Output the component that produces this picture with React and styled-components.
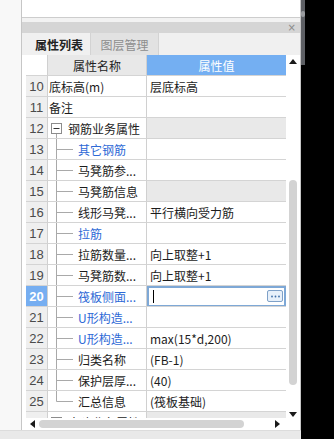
import React from "react";
import styled, { createGlobalStyle } from "styled-components";

const GlobalStyle = createGlobalStyle`
  html, body {
    margin: 0;
    padding: 0;
    background: #000;
  }
  body {
    font-family: "Noto Sans CJK SC", "Noto Sans", sans-serif;
  }
`;

const rows = [
  { n: 10, name: "底标高(m)", value: "层底标高" },
  { n: 11, name: "备注" },
  { n: 12, name: "钢筋业务属性", group: "open", locked: true },
  { n: 13, name: "其它钢筋", child: true, link: true },
  { n: 14, name: "马凳筋参...", child: true },
  { n: 15, name: "马凳筋信息", child: true, locked: true },
  { n: 16, name: "线形马凳...", child: true, value: "平行横向受力筋" },
  { n: 17, name: "拉筋", child: true, link: true },
  { n: 18, name: "拉筋数量...", child: true, value: "向上取整+1" },
  { n: 19, name: "马凳筋数...", child: true, value: "向上取整+1" },
  { n: 20, name: "筏板侧面...", child: true, link: true, editing: true },
  { n: 21, name: "U形构造...", child: true, link: true },
  { n: 22, name: "U形构造...", child: true, link: true, value: "max(15*d,200)" },
  { n: 23, name: "归类名称", child: true, value: "(FB-1)" },
  { n: 24, name: "保护层厚...", child: true, value: "(40)" },
  { n: 25, name: "汇总信息", child: true, last: true, value: "(筏板基础)" },
  { n: 26, name: "土建业务属性", group: "closed", locked: true },
];

const Branch = ({ last }) => (
  <TreeSvg width="28" height="20" viewBox="0 0 28 20">
    <line x1="8.5" y1="0" x2="8.5" y2={last ? 10.5 : 20} />
    <line x1="8.5" y1="10.5" x2="25" y2="10.5" />
  </TreeSvg>
);

const Toggle = ({ open }) => (
  <TreeSvg width="20" height="20" viewBox="0 0 20 20">
    {open && <line x1="8.5" y1="15.5" x2="8.5" y2="20" />}
    <rect x="3.5" y="5.5" width="10" height="10" fill="#fff" stroke="#8c8c8c" />
    <line x1="5.5" y1="10.5" x2="11.5" y2="10.5" stroke="#333" />
    {!open && <line x1="8.5" y1="7.5" x2="8.5" y2="13.5" stroke="#333" />}
  </TreeSvg>
);

const Arrow = ({ dir }) => {
  const pts = {
    up: "0,5 4,0 8,5",
    down: "0,0 8,0 4,5",
    left: "5,0 5,8 0,4",
    right: "0,0 5,4 0,8",
  }[dir];
  const vertical = dir === "up" || dir === "down";
  return (
    <svg width={vertical ? 8 : 5} height={vertical ? 5 : 8}>
      <polygon points={pts} fill="#1a1a1a" />
    </svg>
  );
};

const App = () => {
  return (
    <>
      <GlobalStyle />
      <Screen>
        <Workspace>
          <Main>
            <LeftStrip />
            <Panel>
              <TopPane />
              <PaneGap />
              <DockHeader>
                <CloseMark>×</CloseMark>
              </DockHeader>
              <TabBar>
                <Tab $active>属性列表</Tab>
                <Tab>图层管理</Tab>
              </TabBar>
              <GridArea>
                <Table>
                  <Row>
                    <HeadNum />
                    <HeadCell>属性名称</HeadCell>
                    <HeadCell $accent>属性值</HeadCell>
                  </Row>
                  {rows.map((r) => (
                    <Row key={r.n}>
                      <NumCell $selected={r.editing}>{r.n}</NumCell>
                      <NameCell $link={r.link}>
                        {r.group && <Toggle open={r.group === "open"} />}
                        {r.child && <Branch last={r.last} />}
                        <NameText $indent={r.group ? 0 : r.child ? 2 : 1}>
                          {r.name}
                        </NameText>
                      </NameCell>
                      <ValueCell $locked={r.locked}>
                        {r.editing ? (
                          <EditBox>
                            <Caret />
                            <DotsButton>
                              <svg width="9" height="3" viewBox="0 0 9 3">
                                <circle cx="1" cy="1.5" r="0.9" fill="#3f6fa8" />
                                <circle cx="4.5" cy="1.5" r="0.9" fill="#3f6fa8" />
                                <circle cx="8" cy="1.5" r="0.9" fill="#3f6fa8" />
                              </svg>
                            </DotsButton>
                          </EditBox>
                        ) : (
                          r.value
                        )}
                      </ValueCell>
                    </Row>
                  ))}
                </Table>
                <VScroll>
                  <ArrowSlot>
                    <Arrow dir="up" />
                  </ArrowSlot>
                  <VTrack>
                    <VThumb $offset={113} $size={205} />
                  </VTrack>
                  <ArrowSlot $bottom>
                    <Arrow dir="down" />
                  </ArrowSlot>
                </VScroll>
              </GridArea>
              <HScrollRow>
                <HTrack>
                  <Arrow dir="left" />
                  <HThumb $offset={4} $size={205} />
                  <Arrow dir="right" />
                </HTrack>
                <Corner />
              </HScrollRow>
            </Panel>
          </Main>
          <BottomStrip />
        </Workspace>
        <SideDark>
          <SideStrip>
            <SideKnob />
          </SideStrip>
        </SideDark>
      </Screen>
    </>
  );
};

const Screen = styled.div`
  display: flex;
  width: 334px;
  height: 439px;
  overflow: hidden;
`;

const Workspace = styled.div`
  width: 301px;
  display: flex;
  flex-direction: column;
  background: #f7f7f7;
`;

const Main = styled.div`
  flex: 1;
  min-height: 0;
  display: flex;
`;

const LeftStrip = styled.div`
  width: 21px;
  background: #f8f8f8;
  border-right: 1px solid #c6c6c6;
`;

const Panel = styled.div`
  width: 278px;
  display: flex;
  flex-direction: column;
  background: #fff;
  border-right: 1px solid #c6c6c6;
`;

const TopPane = styled.div`
  height: 17px;
  background: #fff;
  border-bottom: 1px solid #cdcdcd;
`;

const PaneGap = styled.div`
  height: 4px;
  background: #f2f2f2;
`;

const DockHeader = styled.div`
  height: 11px;
  background: #d5d5d5;
  display: flex;
  align-items: center;
  justify-content: flex-end;
  padding-right: 4px;
`;

const CloseMark = styled.span`
  font-family: "DejaVu Sans", sans-serif;
  font-size: 10px;
  line-height: 11px;
  color: #8a8a8a;
`;

const TabBar = styled.div`
  height: 22px;
  display: flex;
  background: #f0f0f0;
`;

const Tab = styled.div`
  width: ${({ $active }) => ($active ? "62px" : "67px")};
  padding-left: ${({ $active }) => ($active ? "6px" : "0")};
  display: flex;
  align-items: center;
  justify-content: center;
  font-size: 12px;
  font-weight: ${({ $active }) => ($active ? 700 : 400)};
  color: ${({ $active }) => ($active ? "#222" : "#8d8d8d")};
  background: ${({ $active }) => ($active ? "#f0f0f0" : "#e2e2e2")};
  border-left: ${({ $active }) => ($active ? "none" : "1px solid #d3d3d3")};
  border-right: ${({ $active }) => ($active ? "none" : "1px solid #d3d3d3")};
`;

const GridArea = styled.div`
  flex: 1;
  min-height: 0;
  display: flex;
`;

const Table = styled.div`
  width: 264px;
  padding-left: 4px;
  box-sizing: border-box;
  display: flex;
  flex-direction: column;
  overflow: hidden;
  background: #fff;
`;

const Row = styled.div`
  display: grid;
  grid-template-columns: 22px 99px 139px;
  height: 21px;
  flex-shrink: 0;
`;

const cellBase = `
  box-sizing: border-box;
  height: 21px;
  border-bottom: 1px solid #d4d4d4;
  display: flex;
  align-items: center;
  white-space: nowrap;
  overflow: hidden;
  font-size: 12px;
`;

const HeadNum = styled.div`
  ${cellBase}
  background: #fff;
  border-right: 1px solid #d0d0d0;
`;

const HeadCell = styled.div`
  ${cellBase}
  justify-content: center;
  background: ${({ $accent }) => ($accent ? "#74aff2" : "#e8e8e8")};
  color: ${({ $accent }) => ($accent ? "#fff" : "#222")};
  border-right: ${({ $accent }) => ($accent ? "none" : "1px solid #d0d0d0")};
`;

const NumCell = styled.div`
  ${cellBase}
  justify-content: center;
  font-family: "Liberation Sans", "Noto Sans", sans-serif;
  font-size: 13px;
  font-weight: ${({ $selected }) => ($selected ? 700 : 400)};
  color: ${({ $selected }) => ($selected ? "#fff" : "#4a4a4a")};
  background: ${({ $selected }) => ($selected ? "#76aef1" : "#efefef")};
  border-right: 1px solid #d0d0d0;
`;

const NameCell = styled.div`
  ${cellBase}
  color: ${({ $link }) => ($link ? "#2d69d6" : "#1c1c1c")};
  border-right: 1px solid #d0d0d0;
`;

const TreeSvg = styled.svg`
  flex-shrink: 0;
  stroke: #a9a9a9;
  stroke-width: 1;
`;

const NameText = styled.span`
  padding-left: ${({ $indent }) => $indent}px;
`;

const ValueCell = styled.div`
  ${cellBase}
  padding-left: 3px;
  color: #1c1c1c;
  background: ${({ $locked }) => ($locked ? "#e9e9e9" : "#fff")};
`;

const EditBox = styled.div`
  box-sizing: border-box;
  margin-left: -3px;
  width: 139px;
  height: 21px;
  border: 2px solid #7ea8d6;
  background: #fff;
  display: flex;
  align-items: center;
  justify-content: space-between;
  padding: 0 1px 0 4px;
`;

const Caret = styled.div`
  width: 1px;
  height: 13px;
  background: #000;
`;

const DotsButton = styled.div`
  box-sizing: border-box;
  width: 16px;
  height: 12px;
  border: 1px solid #7fa1c8;
  border-radius: 2px;
  background: #e7f0fa;
  display: flex;
  align-items: center;
  justify-content: center;
`;

const VScroll = styled.div`
  width: 14px;
  display: flex;
  flex-direction: column;
  background: #fff;
`;

const ArrowSlot = styled.div`
  height: 12px;
  display: flex;
  justify-content: center;
  align-items: ${({ $bottom }) => ($bottom ? "flex-start" : "center")};
  padding-top: ${({ $bottom }) => ($bottom ? "6px" : "0")};
  box-sizing: border-box;
`;

const VTrack = styled.div`
  flex: 1;
  display: flex;
  flex-direction: column;
  align-items: center;
`;

const VThumb = styled.div`
  margin-top: ${({ $offset }) => $offset}px;
  width: 8px;
  height: ${({ $size }) => $size}px;
  border-radius: 4px;
  background: #d3d3d3;
`;

const HScrollRow = styled.div`
  height: 12px;
  display: flex;
  background: #fff;
`;

const HTrack = styled.div`
  width: 264px;
  box-sizing: border-box;
  display: flex;
  align-items: center;
  padding: 0 6px 0 8px;
  justify-content: space-between;
`;

const HThumb = styled.div`
  margin-left: ${({ $offset }) => $offset}px;
  margin-right: auto;
  width: ${({ $size }) => $size}px;
  height: 8px;
  border-radius: 4px;
  background: #d3d3d3;
`;

const Corner = styled.div`
  width: 14px;
`;

const BottomStrip = styled.div`
  height: 9px;
  background: #e9e9e9;
  border-top: 1px solid #dcdcdc;
  box-sizing: border-box;
`;

const SideDark = styled.div`
  flex: 1;
  background: #000;
  display: flex;
  flex-direction: column;
  align-items: flex-start;
`;

const SideStrip = styled.div`
  width: 4px;
  height: 65px;
  background: #5e6065;
  display: flex;
  flex-direction: column;
  align-items: center;
`;

const SideKnob = styled.div`
  margin-top: 11px;
  width: 4px;
  height: 6px;
  border-radius: 2px;
  background: #9a9ca0;
`;

export default App;
